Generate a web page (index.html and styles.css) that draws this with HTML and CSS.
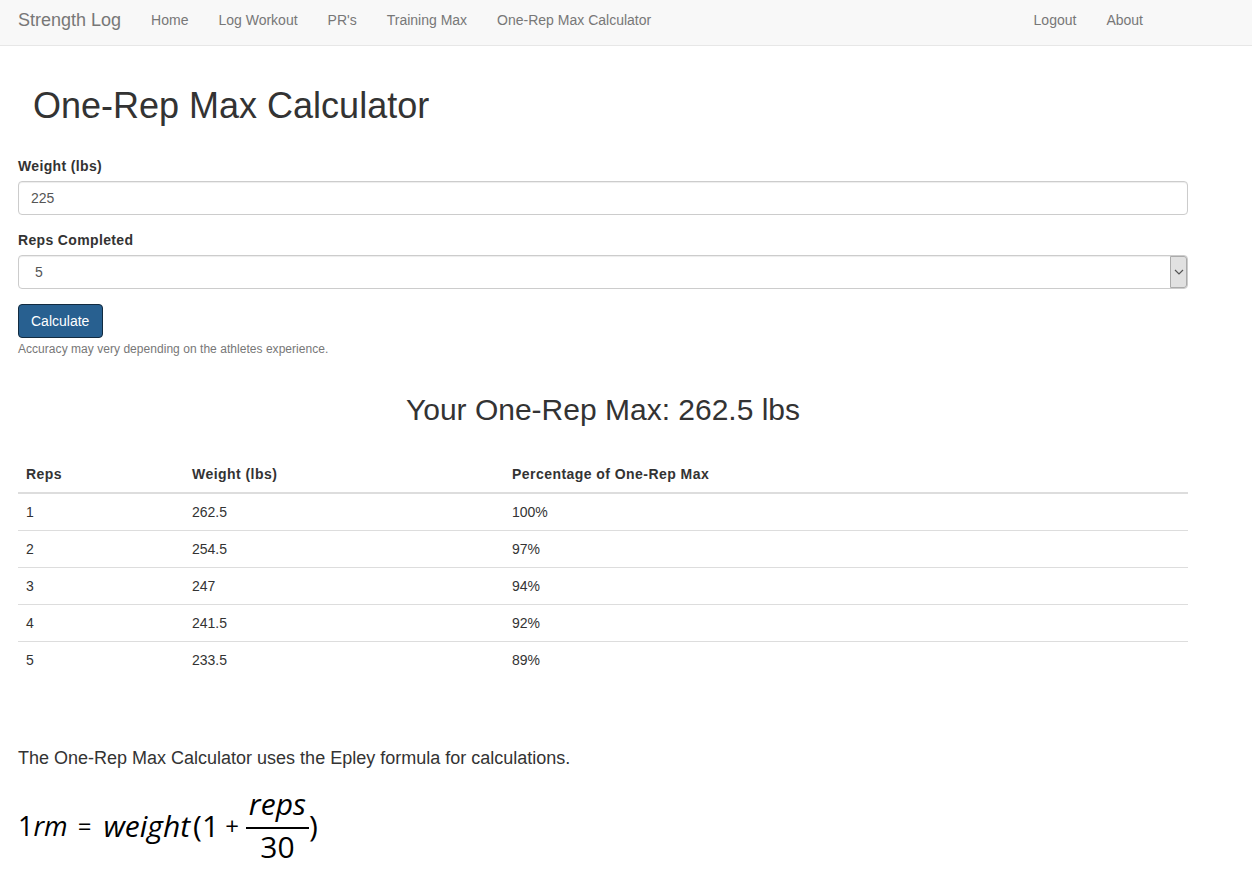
FILE: index.html
```html
<!DOCTYPE html>
<html lang="en">
  <head>
    <meta charset="utf-8">
    <title>Strength Log</title>
    <meta name="viewport" content="width=device-width, initial-scale=1.0">
    <link rel="stylesheet" href="styles.css">
  </head>
  <body>
    <nav class="navbar">
      <a class="brand" href="#">Strength Log</a>
      <ul class="nav">
        <li><a href="#">Home</a></li>
        <li><a href="#">Log Workout</a></li>
        <li><a href="#">PR's</a></li>
        <li><a href="#">Training Max</a></li>
        <li><a href="#">One-Rep Max Calculator</a></li>
      </ul>
      <ul class="nav nav-right">
        <li><a href="#">Logout</a></li>
        <li><a href="#">About</a></li>
      </ul>
    </nav>
    <main class="container">
      <h1>One-Rep Max Calculator</h1>
      <form method="get" action="#">
        <div class="form-group">
          <label for="weight">Weight (lbs)</label>
          <input class="form-control" type="text" id="weight" value="225">
        </div>
        <div class="form-group">
          <label for="reps">Reps Completed</label>
          <div class="select-wrap">
            <select class="form-control" id="reps">
              <option>5</option>
            </select>
            <span class="select-arrow">
              <svg width="10" height="6" viewBox="0 0 10 6"><path d="M1 1l4 4 4-4" fill="none" stroke="#555" stroke-width="1.2"/></svg>
            </span>
          </div>
        </div>
        <button class="btn" type="submit">Calculate</button>
        <small class="help">Accuracy may very depending on the athletes experience.</small>
      </form>
      <h2>Your One-Rep Max: 262.5 lbs</h2>
      <table>
        <thead>
          <tr><th class="col-reps">Reps</th><th class="col-weight">Weight (lbs)</th><th>Percentage of One-Rep Max</th></tr>
        </thead>
        <tbody>
          <tr><td>1</td><td>262.5</td><td>100%</td></tr>
          <tr><td>2</td><td>254.5</td><td>97%</td></tr>
          <tr><td>3</td><td>247</td><td>94%</td></tr>
          <tr><td>4</td><td>241.5</td><td>92%</td></tr>
          <tr><td>5</td><td>233.5</td><td>89%</td></tr>
        </tbody>
      </table>
      <p class="lead">The One-Rep Max Calculator uses the Epley formula for calculations.</p>
      <div class="formula">
        <span class="lhs"><span class="upright">1</span>rm</span>
        <span class="upright op">=</span>
        <span>weight</span>
        <span class="upright paren">(1</span>
        <span class="upright plus">+</span>
        <span class="frac"><span class="num">reps</span><span class="den upright">30</span></span>
        <span class="upright">)</span>
      </div>
    </main>
  </body>
</html>
```

FILE: styles.css
```css
html {
  margin: 0;
  padding: 0;
}
body {
  margin: 0;
  background-color: #fff;
  color: #333;
  font: 14px/20px "Liberation Sans", Arial, sans-serif;
}
a {
  text-decoration: none;
  color: #777;
}

.navbar {
  display: flex;
  align-items: flex-start;
  height: 45px;
  padding-left: 18px;
  background-color: #f8f8f8;
  border-bottom: 1px solid #e7e7e7;
}
.brand {
  padding: 10px 0;
  font-size: 18px;
  margin-right: 15px;
}
.nav {
  display: flex;
  margin: 0;
  padding: 0;
  list-style: none;
}
.nav a {
  display: block;
  padding: 10px 15px;
}
.nav-right {
  margin-left: auto;
  margin-right: 94px;
}

.container {
  width: 1170px;
  margin-left: 18px;
}
h1 {
  margin: 0;
  padding: 40px 15px 30px;
  font-size: 36px;
  line-height: 40px;
  font-weight: 500;
}

.form-group {
  margin-bottom: 15px;
}
label {
  display: block;
  margin-bottom: 5px;
  font-weight: 700;
  letter-spacing: .35px;
}
.form-control {
  display: block;
  box-sizing: border-box;
  width: 100%;
  height: 34px;
  padding: 6px 12px;
  font: 14px/20px "Liberation Sans", Arial, sans-serif;
  color: #555;
  background-color: #fff;
  border: 1px solid #ccc;
  border-radius: 4px;
  box-shadow: inset 0 1px 1px rgba(0,0,0,.075);
}
select.form-control {
  appearance: none;
  padding-left: 16px;
}
.select-wrap {
  position: relative;
}
.select-arrow {
  position: absolute;
  top: 1px;
  right: 1px;
  bottom: 1px;
  display: flex;
  align-items: center;
  justify-content: center;
  width: 15px;
  background-color: #e1e1e1;
  border: 1px solid #ababab;
  border-radius: 0 3px 3px 0;
}

.btn {
  display: block;
  height: 34px;
  padding: 6px 13px 6px 12px;
  font: 14px/20px "Liberation Sans", Arial, sans-serif;
  color: #fff;
  background-color: #286090;
  border: 1px solid #122b40;
  border-radius: 4px;
}
.help {
  display: block;
  margin-top: 3px;
  font-size: 12px;
  line-height: 17px;
  letter-spacing: .04px;
  color: #777;
}

h2 {
  margin: 35px 0 30px;
  text-align: center;
  font-size: 30px;
  line-height: 33px;
  font-weight: 500;
}

table {
  width: 100%;
  border-collapse: collapse;
  margin-bottom: 68px;
}
th, td {
  padding: 8px;
  text-align: left;
  line-height: 20px;
}
th {
  border-bottom: 2px solid #ddd;
  letter-spacing: .45px;
}
td {
  border-top: 1px solid #ddd;
}
tbody tr:first-child td {
  border-top: 0;
}
.col-reps {
  width: 150px;
}
.col-weight {
  width: 304px;
}

.lead {
  margin: 0 0 15px;
  font-size: 18px;
  line-height: 25px;
}
.formula {
  display: flex;
  align-items: center;
  font: italic 30px/36px "Open Sans", sans-serif;
  color: #000;
  white-space: pre;
}
.upright {
  font-style: normal;
}
.lhs {
  font-size: 27px;
}
.op {
  margin: 0 12px 0 10px;
  font-size: 24px;
}
.paren {
  margin-left: 3px;
}
.plus {
  margin: 0 7px 0 6px;
  font-size: 24px;
}
.frac {
  display: flex;
  flex-direction: column;
  align-items: center;
}
.num {
  padding: 0 3px 5px;
  border-bottom: 2px solid #000;
}
```
